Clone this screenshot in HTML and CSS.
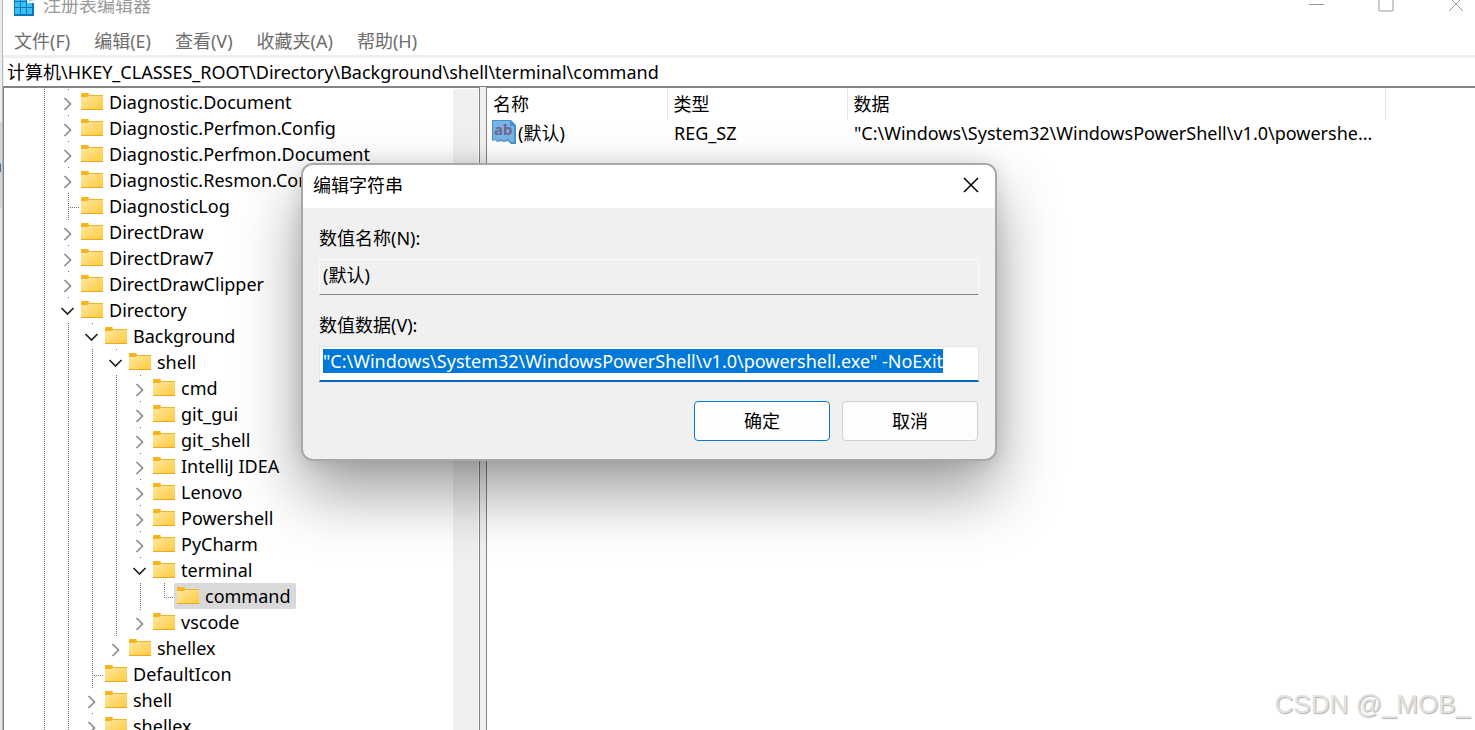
FILE: index.html
```html
<!DOCTYPE html>
<html lang="zh-CN">
<head>
    <meta charset="utf-8">
    <title>注册表编辑器</title>
    <link rel="stylesheet" href="styles.css">
</head>
<body>
    <svg width="0" height="0" class="defs">
        <defs>
            <linearGradient id="folderFill" x1="0" y1="0" x2="1" y2="1">
                <stop offset="0" stop-color="#ffe9a6"/>
                <stop offset="1" stop-color="#ffca3c"/>
            </linearGradient>
            <symbol id="folder" viewBox="0 0 22 17">
                <path d="M0 1q0-1 1-1h6l1 1v3H0z" fill="#f9b61a"/>
                <path d="M0 3h7l1-1h14v14H0z" fill="url(#folderFill)"/>
                <path d="M0 3h7l1-1h14v1H8l-1 1H0z" fill="#f0b429"/>
                <path d="M0 16h22v1H0z" fill="#e8a920"/>
            </symbol>
            <symbol id="closed" viewBox="0 0 24 26">
                <path d="M8.5 9l6 6-6 6" fill="none" stroke="#8c8c8c" stroke-width="1.7"/>
            </symbol>
            <symbol id="open" viewBox="0 0 24 26">
                <path d="M5.5 11l6 6 6-6" fill="none" stroke="#222" stroke-width="1.7"/>
            </symbol>
        </defs>
    </svg>

    <div class="desktop">
        <div class="behind"><span>n</span></div>
        <div class="window">
            <header class="titlebar">
                <svg class="app-icon" width="20" height="24" viewBox="0 0 20 24">
                    <path d="M0 0h13v6h7v18H0z" fill="#0a78b8"/>
                    <path d="M1 4h5v5H1zM7 4h5v5H7zM1 10h5v5H1zM7 10h5v5H7zM13 11h5v4h-5zM1 16h5v6H1zM7 16h5v6H7zM13 16h5v6h-5z" fill="#3cc0f4"/>
                    <path d="M13 4l7-2v9h-7z" fill="#fff"/>
                    <path d="M15 4l5-2v6l-5 2z" fill="#8ed8f8"/>
                </svg>
                <h1>注册表编辑器</h1>
                <div class="window-buttons">
                    <button type="button" aria-label="最小化"><svg width="16" height="16" viewBox="0 0 16 16"><path d="M1 8.5h15"/></svg></button>
                    <button type="button" aria-label="最大化"><svg width="16" height="16" viewBox="0 0 16 16"><rect x="1" y="2" width="14" height="13" rx="1"/></svg></button>
                    <button type="button" aria-label="关闭"><svg width="16" height="16" viewBox="0 0 16 16"><path d="M1 1l14 14M15 1L1 15"/></svg></button>
                </div>
            </header>
            <nav class="menu">
                <button type="button">文件(F)</button>
                <button type="button">编辑(E)</button>
                <button type="button">查看(V)</button>
                <button type="button">收藏夹(A)</button>
                <button type="button">帮助(H)</button>
            </nav>
            <input class="address" type="text" aria-label="地址" value="计算机\HKEY_CLASSES_ROOT\Directory\Background\shell\terminal\command">
            <main class="panes">
                <div class="tree-pane">
                    <ul class="tree" id="tree"></ul>
                    <div class="scrollbar"></div>
                </div>
                <div class="splitter"></div>
                <div class="values">
                    <table>
                        <thead>
                            <tr><th class="col-name">名称</th><th class="col-type">类型</th><th class="col-data">数据</th></tr>
                        </thead>
                        <tbody>
                            <tr>
                                <td class="value-name">
                                    <svg width="24" height="24" viewBox="0 0 24 24">
                                        <path d="M0 0h19l5 5v19h-5l-3-3-4 1-3-1-4 1-2-2-3 1z" fill="#4a90c4"/>
                                        <path d="M1 1h17v5h4v16h-3l-3-3-4 2-3-2-4 2-2-2-2 1z" fill="#78b4e6"/>
                                        <text x="2" y="15">ab</text>
                                    </svg>
                                    <span>(默认)</span>
                                </td>
                                <td>REG_SZ</td>
                                <td>"C:\Windows\System32\WindowsPowerShell\v1.0\powershe...</td>
                            </tr>
                        </tbody>
                    </table>
                </div>
            </main>
        </div>
    </div>

    <form class="dialog" role="dialog" aria-labelledby="dialogTitle">
        <div class="dialog-title">
            <h2 id="dialogTitle">编辑字符串</h2>
            <button type="button" aria-label="关闭"><svg width="16" height="16" viewBox="0 0 16 16"><path d="M1 1l14 14M15 1L1 15"/></svg></button>
        </div>
        <div class="dialog-body">
            <label for="valueName">数值名称(N):</label>
            <input type="text" id="valueName" value="(默认)" readonly>
            <label for="valueData">数值数据(V):</label>
            <input type="text" id="valueData" value="&quot;C:\Windows\System32\WindowsPowerShell\v1.0\powershell.exe&quot; -NoExit">
            <div class="actions">
                <button type="submit" class="primary">确定</button>
                <button type="button">取消</button>
            </div>
        </div>
    </form>

    <div class="watermark">CSDN @_MOB_</div>

    <script src="script.js"></script>
</body>
</html>
```
FILE: styles.css
```css
* {
    box-sizing: border-box;
}
body {
    margin: 0;
    height: 100vh;
    overflow: hidden;
    font-family: "Noto Sans", "Noto Sans CJK SC", sans-serif;
    font-size: 18px;
    line-height: 26px;
    color: #000;
    background: #fff;
}
h1, h2 {
    margin: 0;
    font-size: 18px;
    font-weight: normal;
}
button, input {
    font: inherit;
    color: inherit;
}
button {
    padding: 0;
    border: none;
    background: none;
}
svg {
    display: block;
    flex: none;
}
.defs {
    position: absolute;
}
.desktop {
    display: flex;
    height: 100vh;
}

/* window that shows behind the left edge */
.behind {
    width: 3px;
    flex: none;
    overflow: hidden;
    display: flex;
    justify-content: flex-end;
    padding-top: 152px;
    background: linear-gradient(#ededed 122px, #d4d4d4 122px, #d4d4d4 208px, #e6e6e6 208px);
    border-right: 1px solid #b4b4b4;
    color: #444;
}
.window {
    flex: 1;
    min-width: 0;
    display: flex;
    flex-direction: column;
}

/* title bar and menu */
.titlebar {
    height: 28px;
    padding-left: 11px;
    display: flex;
    align-items: flex-start;
    color: #999;
    margin-top: -8px;
}
.app-icon {
    margin: 0 9px 0 0;
}
.window-buttons {
    margin-left: auto;
    display: flex;
    gap: 54px;
    padding: 4px 11px 0 0;
}
.window-buttons svg {
    fill: none;
    stroke: #999;
}
.menu {
    height: 35px;
    padding: 8px 11px 0;
    display: flex;
    align-items: flex-start;
    gap: 24px;
    color: #6d6d6d;
}
.address {
    height: 31px;
    padding: 0 3px 2px;
    border: solid #efefef;
    border-width: 3px 0 0 1px;
    background: #fff;
    outline: none;
}
.panes {
    flex: 1;
    min-height: 0;
    display: flex;
    overflow: hidden;
}

/* key tree */
.tree-pane {
    width: 477px;
    flex: none;
    display: flex;
    overflow: hidden;
    padding-top: 1px;
    border: solid #828287;
    border-width: 2px 1px 0 1px;
}
.tree {
    flex: 1;
    margin: 0;
    padding: 0 0 0 28px;
    list-style: none;
}
.tree li {
    height: 26px;
    display: flex;
}
.cell {
    width: 24px;
    height: 26px;
    flex: none;
}
.guide {
    background: repeating-linear-gradient(#777 0 1px, #fff 1px 2px) 12px 0 / 1px 26px no-repeat;
}
.leaf {
    background:
        repeating-linear-gradient(90deg, #777 0 1px, #fff 1px 2px) 12px 14px / 12px 1px no-repeat,
        repeating-linear-gradient(#777 0 1px, #fff 1px 2px) 12px 0 / 1px 26px no-repeat;
}
.leaf.last {
    background-size: 12px 1px, 1px 14px;
}
.twisty {
    background: linear-gradient(#777, #777) 12px 0 / 1px 1px no-repeat;
}
.key {
    display: flex;
    padding-right: 6px;
    white-space: nowrap;
}
.key svg {
    margin: 4px 6px 0 1px;
}
.selected .leaf {
    width: 22px;
}
.selected .key {
    padding-left: 2px;
    border-radius: 2px;
    background: #d9d9d9;
}
.scrollbar {
    width: 26px;
    border-right: 1px solid #fff;
    background: #f0f0f0;
}
.splitter {
    width: 6px;
    flex: none;
    border-top: 1px solid #828287;
    background: #f0f0f0;
}

/* value list */
.values {
    flex: 1;
    min-width: 0;
    border: solid #828287;
    border-width: 2px 0 0 1px;
}
table {
    table-layout: fixed;
    width: 899px;
    border-collapse: collapse;
}
th, td {
    padding: 0 6px;
    font-weight: normal;
    text-align: left;
    white-space: nowrap;
}
td {
    padding-left: 7px;
}
th {
    height: 32px;
    border-right: 1px solid #e5e5e5;
}
.col-name {
    width: 180px;
}
.col-type {
    width: 180px;
}
.value-name {
    display: flex;
    gap: 2px;
    padding-left: 5px;
}
.value-name text {
    font: bold 15px "Noto Sans", sans-serif;
    fill: #6d6a8c;
}

/* edit string dialog */
.dialog {
    position: absolute;
    left: 301px;
    top: 163px;
    width: 696px;
    border: 2px solid #a8a8a8;
    border-radius: 12px;
    background: #f0f0f0;
    background-clip: padding-box;
    box-shadow: 0 32px 64px rgba(0, 0, 0, 0.38), 0 0 20px rgba(0, 0, 0, 0.12);
    overflow: hidden;
}
.dialog-title {
    height: 43px;
    padding: 0 16px 3px 10px;
    display: flex;
    align-items: center;
    justify-content: space-between;
    background: #fff;
}
.dialog-title svg {
    fill: none;
    stroke: #000;
    stroke-width: 1.5;
}
.dialog-body {
    padding: 17px 16px 18px;
}
.dialog label {
    display: block;
}
.dialog input {
    display: block;
    width: 100%;
    height: 36px;
    margin: 8px 0 17px;
    padding: 0 3px 6px;
    border: 1px solid #fafafa;
    border-bottom-color: #868686;
    background: #f0f0f0;
    outline: none;
}
.dialog #valueData {
    border-color: #e5e5e5;
    border-bottom: 2px solid #0067c0;
    background: #fff;
}
.dialog input::selection {
    background: #0078d7;
    color: #fff;
}
.actions {
    display: flex;
    justify-content: flex-end;
    gap: 12px;
    padding: 2px 1px 0 0;
}
.actions button {
    width: 136px;
    height: 40px;
    border: 1px solid #d0d0d0;
    border-radius: 4px;
    background: #fdfdfd;
}
.actions .primary {
    border-color: #0078d4;
}
.watermark {
    position: absolute;
    right: 5px;
    bottom: 8px;
    font: 26px/36px "Liberation Sans", Arial, sans-serif;
    color: #e2e2e2;
    text-shadow: 1px 1px 1px #b0b0b0;
}
```
FILE: script.js
```js
// [level, name, state]
const keys = [
    [1, 'Diagnostic.Document', 'closed'],
    [1, 'Diagnostic.Perfmon.Config', 'closed'],
    [1, 'Diagnostic.Perfmon.Document', 'closed'],
    [1, 'Diagnostic.Resmon.Config', 'closed'],
    [1, 'DiagnosticLog', 'leaf'],
    [1, 'DirectDraw', 'closed'],
    [1, 'DirectDraw7', 'closed'],
    [1, 'DirectDrawClipper', 'closed'],
    [1, 'Directory', 'open'],
    [2, 'Background', 'open'],
    [3, 'shell', 'open'],
    [4, 'cmd', 'closed'],
    [4, 'git_gui', 'closed'],
    [4, 'git_shell', 'closed'],
    [4, 'IntelliJ IDEA', 'closed'],
    [4, 'Lenovo', 'closed'],
    [4, 'Powershell', 'closed'],
    [4, 'PyCharm', 'closed'],
    [4, 'terminal', 'open'],
    [5, 'command', 'leaf last'],
    [4, 'vscode', 'closed'],
    [3, 'shellex', 'closed'],
    [2, 'DefaultIcon', 'leaf'],
    [2, 'shell', 'closed'],
    [2, 'shellex', 'closed']
];

document.getElementById('tree').innerHTML = keys.map(([level, name, state]) => {
    const guides = '<span class="cell guide"></span>'.repeat(level);
    const twisty = state.startsWith('leaf')
        ? `<span class="cell ${state}"></span>`
        : `<svg class="cell twisty"><use href="#${state}"/></svg>`;
    const selected = name === 'command' ? ' class="selected"' : '';
    return `<li${selected}>${guides}${twisty}<span class="key"><svg width="22" height="17"><use href="#folder"/></svg>${name}</span></li>`;
}).join('');

// the value is ready to be overwritten when the dialog opens
const valueData = document.getElementById('valueData');
valueData.focus();
valueData.select();
```
